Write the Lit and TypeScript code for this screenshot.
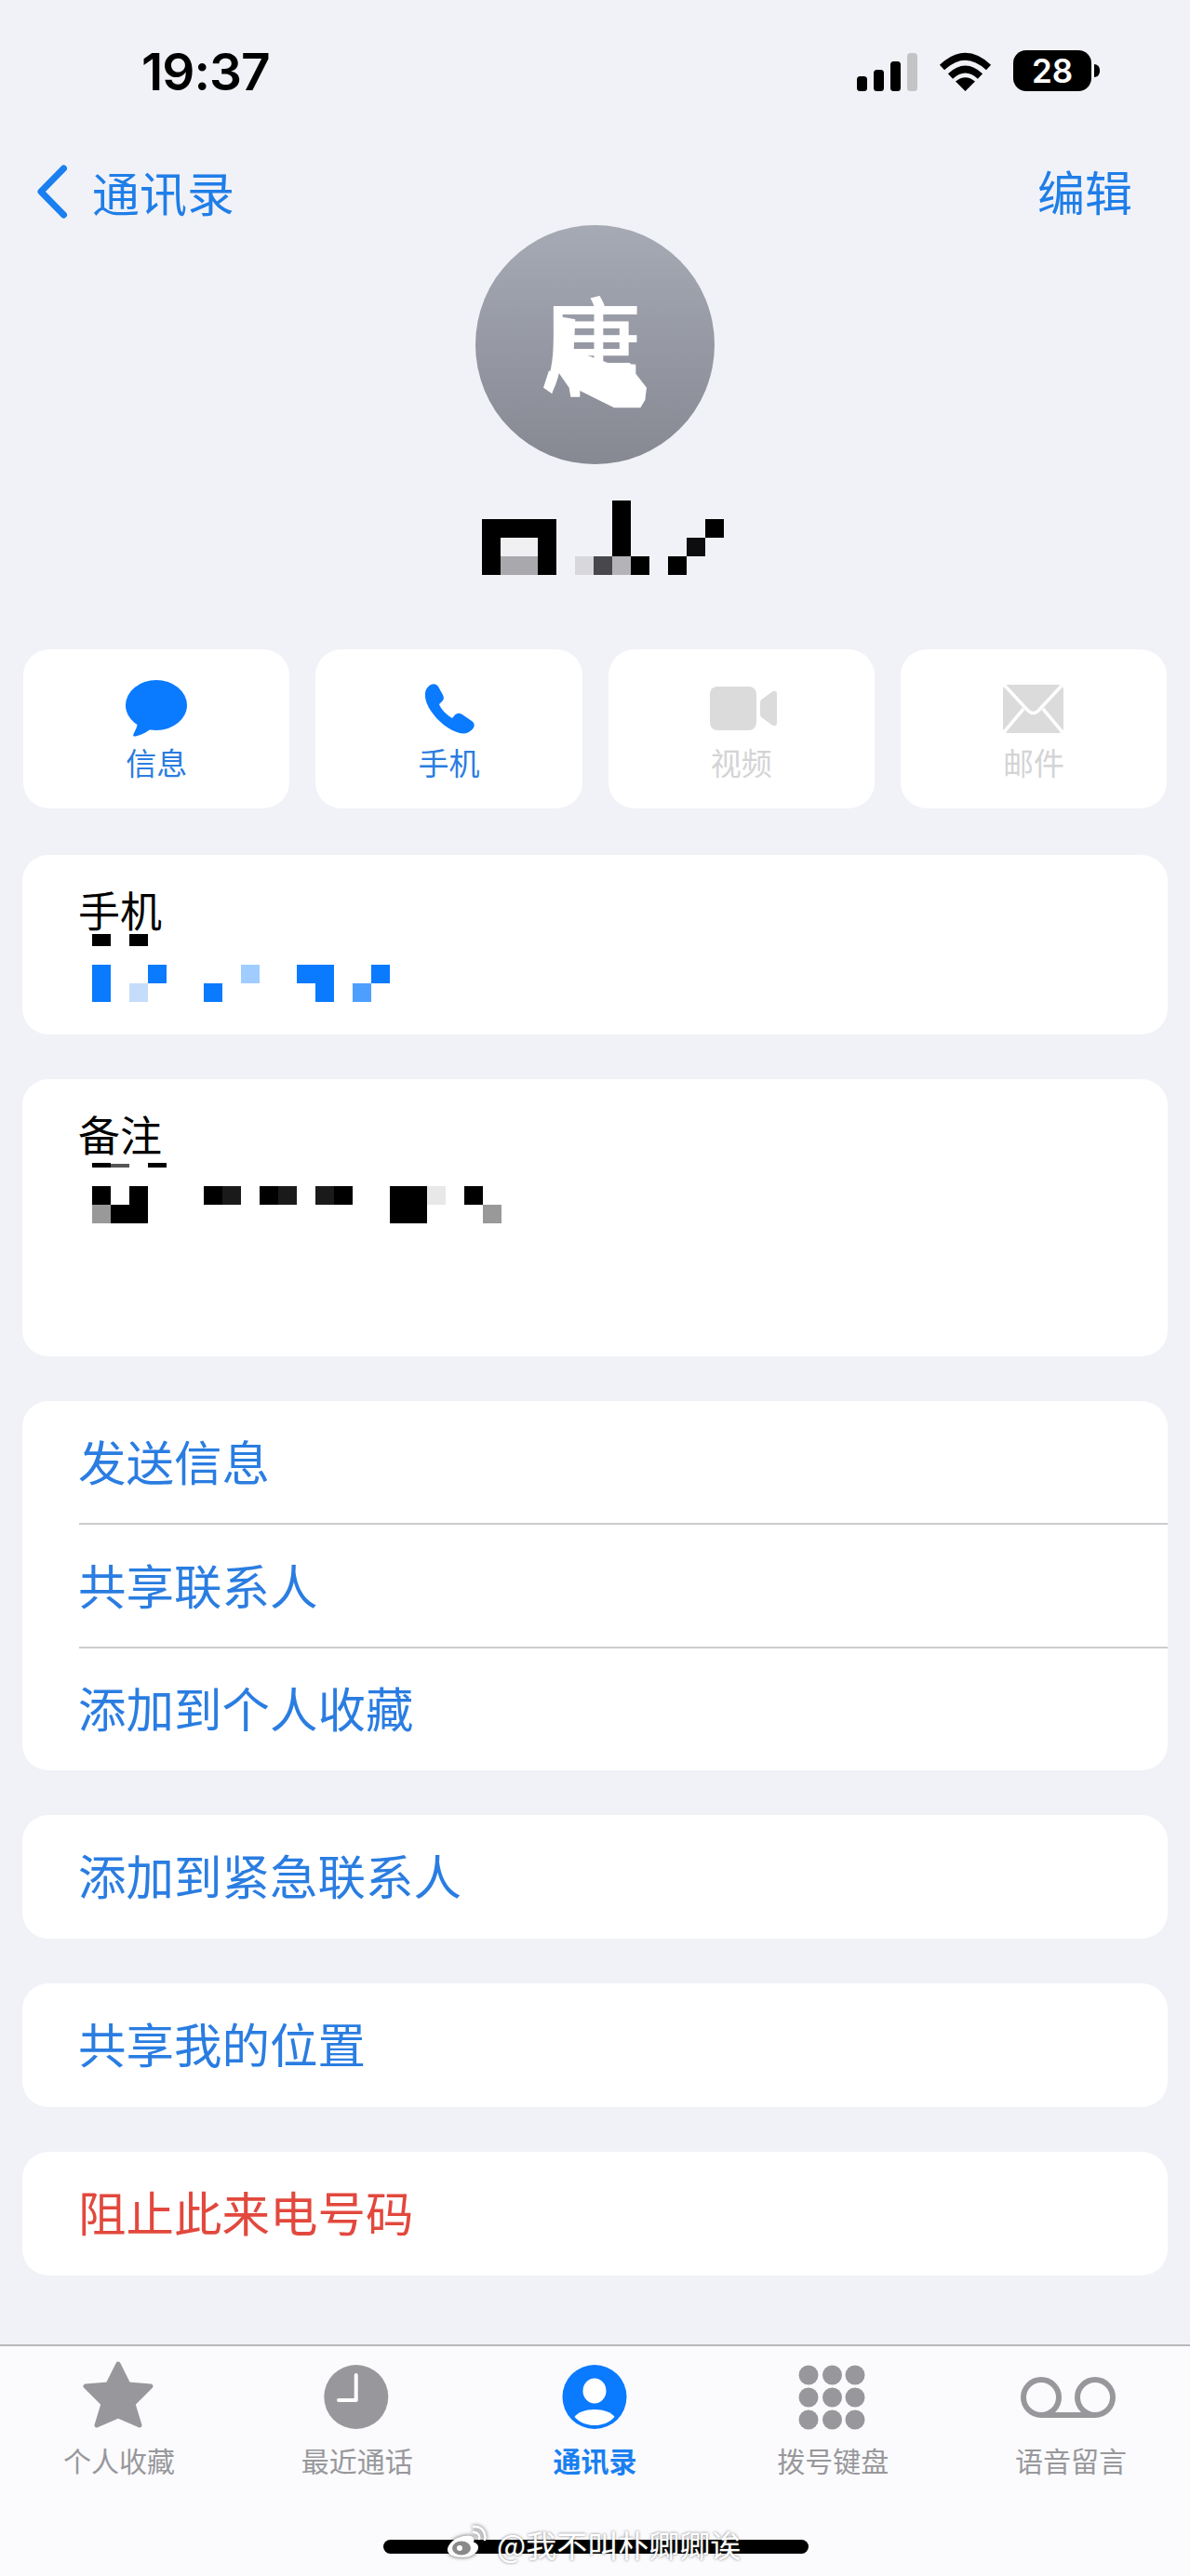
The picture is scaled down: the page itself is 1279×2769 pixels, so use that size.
import { LitElement, html, css, svg } from "lit";
import { customElement } from "lit/decorators.js";

type Cell = [number, number, number, number, string];
const K = "#000";
const B = "#0a7aff";

const NAME: Cell[] = [
  [0, 20, 80, 20, K], [0, 40, 20, 40, K], [60, 40, 20, 40, K],
  [20, 40, 40, 20, "#f0f0f2"], [20, 60, 40, 20, "#a9a9ad"],
  [100, 60, 20, 20, "#d8d8dc"], [120, 60, 20, 20, "#48484c"], [140, 60, 20, 20, "#b4b4b8"], [160, 60, 20, 20, K],
  [140, 0, 20, 60, K],
  [200, 60, 20, 20, K], [220, 40, 20, 20, "#0d0d10"], [240, 20, 20, 20, K],
];
const PHONE: Cell[] = [
  [0, 0, 20, 13, K], [40, 0, 20, 13, K],
  [0, 33, 20, 40, B], [40, 53, 20, 20, "#c5dcfb"], [60, 33, 20, 20, B],
  [120, 53, 20, 20, B], [160, 33, 20, 20, "#a0ccff"],
  [220, 33, 40, 20, B], [240, 53, 20, 20, B],
  [280, 53, 20, 20, "#4d9fff"], [300, 33, 20, 20, B],
];
const NOTE: Cell[] = [
  [0, 0, 20, 5, K], [20, 1, 20, 4, "#555"], [60, 0, 20, 5, K],
  [0, 25, 20, 20, K], [0, 45, 20, 20, "#999"], [20, 45, 20, 20, K], [40, 25, 20, 40, K],
  [120, 25, 20, 20, K], [140, 25, 20, 20, "#1a1a1a"],
  [180, 25, 20, 20, K], [200, 25, 20, 20, "#1a1a1a"],
  [240, 25, 20, 20, "#1a1a1a"], [260, 25, 20, 20, K],
  [320, 25, 40, 40, K], [360, 25, 20, 20, "#e8e8e8"],
  [400, 25, 20, 20, K], [420, 45, 20, 20, "#999"],
];

const mosaic = (cells: Cell[], w: number, h: number, cls: string) => html`
  <svg class=${cls} width=${w} height=${h} viewBox="0 0 ${w} ${h}" shape-rendering="crispEdges">
    ${cells.map(([x, y, cw, ch, c]) => svg`<rect x=${x} y=${y} width=${cw} height=${ch} fill=${c}></rect>`)}
  </svg>`;

const icons = {
  message: html`<svg width="66" height="62" viewBox="0 0 66 62"><ellipse cx="33" cy="27" rx="33" ry="27" fill="#0a7aff"/><path d="M13 44C13 50 10 55 8.500 58C7.500 60.500 9 61 11.500 60.300C18 58.500 24 55.500 29 51Z" fill="#0a7aff"/></svg>`,
  phone: html`<svg width="55" height="54" viewBox="0 0 55 54"><path d="M8 1C11-.5 14 0 16 3L21 12C22.500 15 22 17 20 19L17 22C19 27 24 33 31 37L34 33.500C36 31.500 38.500 31 41 32.500L52 40C55 42 55.500 45 53.500 48C50 52.500 45 54.500 39 53C28 50 16 41 8 29C2 20-2 7 8 1Z" fill="#0a7aff"/></svg>`,
  video: html`<svg class="video" width="72" height="48" viewBox="0 0 72 48"><rect x="0" y="0" width="50" height="47" rx="8" fill="#dbdbdb"/><path d="M54 17C54 15.500 55 14.300 56 13.500L67 5.500C69.500 3.800 72 5 72 8V39C72 42 69.500 43.200 67 41.500L56 33.500C55 32.700 54 31.500 54 30Z" fill="#dbdbdb"/></svg>`,
  mail: html`<svg width="65" height="52" viewBox="0 0 65 52"><rect width="65" height="52" rx="5" fill="#dbdbdb"/><path d="M2 1L27 28Q32.500 33 38 28L63 1M1 51L22 26M64 51L43 26" fill="none" stroke="#fff" stroke-width="3.500"/></svg>`,
};

const G = "#98989c";
const tabIcons = [
  html`<svg width="110" height="76" viewBox="0 0 110 76"><path transform="translate(16 1)" d="M38 3L49 25L73 27L54 46L61 69L38 59L15 69L22 46L3 27L27 25Z" fill=${G} stroke=${G} stroke-width="5" stroke-linejoin="round"/></svg>`,
  html`<svg width="110" height="76" viewBox="0 0 110 76"><circle cx="53.800" cy="39.500" r="34.500" fill=${G}/><path d="M53.700 16V43H35" fill="none" stroke="#fff" stroke-width="4" stroke-linecap="round" stroke-linejoin="round"/></svg>`,
  html`<svg width="110" height="76" viewBox="0 0 110 76"><circle cx="55" cy="39.500" r="34.500" fill=${B}/><ellipse cx="55" cy="33" rx="12.500" ry="13.500" fill="#fff"/><path d="M33.500 61C37 56 45 53 55 53C65 53 73 56 76.500 61C70.500 67.500 63 70 55 70C47 70 39.500 67.500 33.500 61Z" fill="#fff"/></svg>`,
  html`<svg width="110" height="76" viewBox="0 0 110 76" fill=${G}>${[29, 54.5, 79].map((x) => [16, 40, 64].map((y) => svg`<circle cx=${x} cy=${y} r="10.500"></circle>`))}</svg>`,
  html`<svg width="110" height="76" viewBox="0 0 110 76"><path d="M23 59A19 19 0 1 1 23 21A19 19 0 1 1 23 59H81A19 19 0 1 0 81 21A19 19 0 1 0 81 59" fill="none" stroke=${G} stroke-width="6"/></svg>`,
];
const tabs = ["个人收藏", "最近通话", "通讯录", "拨号键盘", "语音留言"];
const actions = [
  { label: "信息", icon: icons.message, off: false },
  { label: "手机", icon: icons.phone, off: false },
  { label: "视频", icon: icons.video, off: true },
  { label: "邮件", icon: icons.mail, off: true },
];
const singles = [
  { label: "添加到紧急联系人", red: false },
  { label: "共享我的位置", red: false },
  { label: "阻止此来电号码", red: true },
];

@customElement("app-root")
export class AppRoot extends LitElement {
  static styles = css`
    :host {
      display: block;
      width: 1279px;
      height: 2769px;
      overflow: hidden;
      position: relative;
      background: #f1f2f7;
      font-family: "Noto Sans CJK SC", "Liberation Sans", sans-serif;
    }
    svg { display: block; flex: none; }
    .status { height: 152px; display: flex; align-items: center; padding-left: 152px; }
    .time { font: 600 55px/54px Inter, sans-serif; letter-spacing: -1px; color: #000; margin-top: 2px; }
    .status-right { margin-left: auto; margin-right: 97px; display: flex; align-items: flex-end; height: 44px; }
    .signal { display: flex; align-items: flex-end; gap: 7px; margin-right: 23px; }
    .signal i { display: block; width: 11px; background: #000; border-radius: 3.500px; }
    .signal .h1 { height: 16px; }
    .signal .h2 { height: 23px; }
    .signal .h3 { height: 32px; }
    .signal .h4 { height: 41px; background: #c4c4c6; }
    .wifi { margin-right: 23px; }
    .batt-wrap { display: flex; align-items: center; height: 44px; gap: 3px; }
    .batt { width: 84px; height: 44px; border-radius: 14px; background: #000; color: #fff; font: 600 35px/44px Inter, sans-serif; text-align: center; }
    .nub { width: 6px; height: 14px; background: #000; border-radius: 0 7px 7px 0; }

    .nav { height: 90px; box-sizing: border-box; padding: 25px 62px 0 39px; display: flex; align-items: flex-start; color: #1f7ee8; font-size: 51px; line-height: 51px; }
    .back { display: flex; align-items: center; gap: 26px; }
    .edit { margin-left: auto; margin-top: 3px; }

    .avatar { position: relative; width: 257px; height: 257px; margin-left: 511px; border-radius: 50%; background: linear-gradient(#a6aab5, #868892); display: flex; justify-content: center; color: #fff; overflow: hidden; }
    .avatar span { font-size: 108px; line-height: 1; font-weight: 500; margin-top: 68px; margin-left: -6px; }
    .blot { position: absolute; left: 0; top: 0; }
    .name { margin: 39px 0 0 518px; }

    .actions { display: flex; gap: 28px; margin: 80px 25px 0; }
    .action { flex: 1; height: 171px; background: #fff; border-radius: 28px; display: flex; flex-direction: column; align-items: center; color: #2a7de1; font-size: 33px; line-height: 33px; }
    .action.off { color: #d4d4d6; }
    .action-icon { height: 64px; margin-top: 32px; display: flex; align-items: center; justify-content: center; }
    .video { transform: translateX(2px); }
    .action-label { margin-top: 9px; }

    .card { margin: 0 24px; background: #fff; border-radius: 28px; }
    .detail { box-sizing: border-box; padding: 37px 0 0 60px; font-size: 45px; line-height: 44px; color: #000; }
    .detail svg { margin-left: 15px; }
    .phone { height: 193px; margin-top: 50px; }
    .phone svg { margin-top: 4px; }
    .note { height: 298px; margin-top: 48px; }
    .note svg { margin-top: 9px; }

    .rows { margin-top: 48px; }
    .row { box-sizing: border-box; padding: 0 0 4px 60px; display: flex; align-items: center; font-size: 51.500px; line-height: 51px; color: #2a7de1; }
    .sep { height: 2px; background: #cdcdd0; margin-left: 61px; }
    .row.s { height: 131px; }
    .row.s.last { padding-bottom: 6px; }
    .single { margin-top: 48px; height: 133px; }
    .single .row { height: 133px; padding-bottom: 6px; }
    .red { color: #e2483d; }

    .tabbar { position: relative; margin-top: 74px; height: 249px; box-sizing: border-box; border-top: 2px solid #b9b9bd; background: #fbfbfd; }
    .tab-grid { display: grid; grid-template-columns: repeat(5, 1fr); padding-top: 15px; }
    .tab { display: flex; flex-direction: column; align-items: center; color: #98989c; font-size: 30px; line-height: 32px; }
    .tab span { margin-top: 15px; }
    .tab.on { color: #1a7ff0; font-weight: 700; }
    .home { position: absolute; left: 412px; top: 208px; width: 457px; height: 15px; border-radius: 8px; background: #000; }
    .mark { position: absolute; left: 480px; top: 194px; display: flex; align-items: center; gap: 10px; color: #fff; font-size: 33px; line-height: 38px; text-shadow: 0 0 3px rgba(70,70,70,.75); }
    .mark svg { filter: drop-shadow(0 0 2px rgba(40,40,40,.8)); margin-top: -6px; }
  `;

  render() {
    return html`
      <div class="status">
        <div class="time">19:37</div>
        <div class="status-right">
          <div class="signal"><i class="h1"></i><i class="h2"></i><i class="h3"></i><i class="h4"></i></div>
          <svg class="wifi" width="57" height="42" viewBox="0 0 57 42">
            <path d="M3.500 16.500Q28.500-7 53.500 16.500M12.500 26Q28.500 11 44.500 26" fill="none" stroke="#000" stroke-width="7.500"/>
            <path d="M28.500 42L18 31.500Q28.500 23 39 31.500Z" fill="#000"/>
          </svg>
          <div class="batt-wrap"><div class="batt">28</div><div class="nub"></div></div>
        </div>
      </div>
      <div class="nav">
        <div class="back">
          <svg width="34" height="58" viewBox="0 0 34 58"><path d="M29.500 4L5 29L29.500 54" fill="none" stroke="#1a7ff0" stroke-width="7" stroke-linecap="round" stroke-linejoin="round"/></svg>
          <span>通讯录</span>
        </div>
        <div class="edit">编辑</div>
      </div>
      <div class="avatar">
        <span>唐</span>
        <svg class="blot" width="257" height="257" viewBox="93 66 771 771" fill="#fff">
          <path d="M360 360L415 370L410 470L520 510L610 515L610 545L645 590L640 630L625 655L540 655L430 600L430 620L400 620L395 590L360 540Z"/>
          <path d="M330 535L355 555L340 610L312 590Z"/>
        </svg>
      </div>
      ${mosaic(NAME, 260, 80, "name")}
      <div class="actions">
        ${actions.map((a) => html`
          <div class="action ${a.off ? "off" : ""}">
            <div class="action-icon">${a.icon}</div>
            <div class="action-label">${a.label}</div>
          </div>`)}
      </div>
      <div class="card detail phone">手机${mosaic(PHONE, 320, 73, "")}</div>
      <div class="card detail note">备注${mosaic(NOTE, 440, 65, "")}</div>
      <div class="card rows">
        <div class="row s">发送信息</div>
        <div class="sep"></div>
        <div class="row s">共享联系人</div>
        <div class="sep"></div>
        <div class="row s last">添加到个人收藏</div>
      </div>
      ${singles.map((s) => html`<div class="card single"><div class="row ${s.red ? "red" : ""}">${s.label}</div></div>`)}
      <div class="tabbar">
        <div class="tab-grid">
          ${tabs.map((t, i) => html`<div class="tab ${i === 2 ? "on" : ""}">${tabIcons[i]}<span>${t}</span></div>`)}
        </div>
        <div class="home"></div>
        <div class="mark">
          <svg width="44" height="36" viewBox="0 0 44 36">
            <path d="M18 12C8 14 1 21 1 27C1 32 8 35 17 35C27 35 34 30 34 24C34 21 31 19 29 19C31 13 27 10 18 12Z" fill="#fff"/>
            <ellipse cx="16" cy="25" rx="10" ry="7.500" fill="#8a8a8a"/>
            <circle cx="14" cy="25" r="3" fill="#fff"/>
            <path d="M29 2C37 1 43 8 41 16M29 8C33 8 36 11 35 15" fill="none" stroke="#fff" stroke-width="2.500" stroke-linecap="round"/>
          </svg>
          <span>@我不叫朴卿卿诶</span>
        </div>
      </div>
    `;
  }
}
